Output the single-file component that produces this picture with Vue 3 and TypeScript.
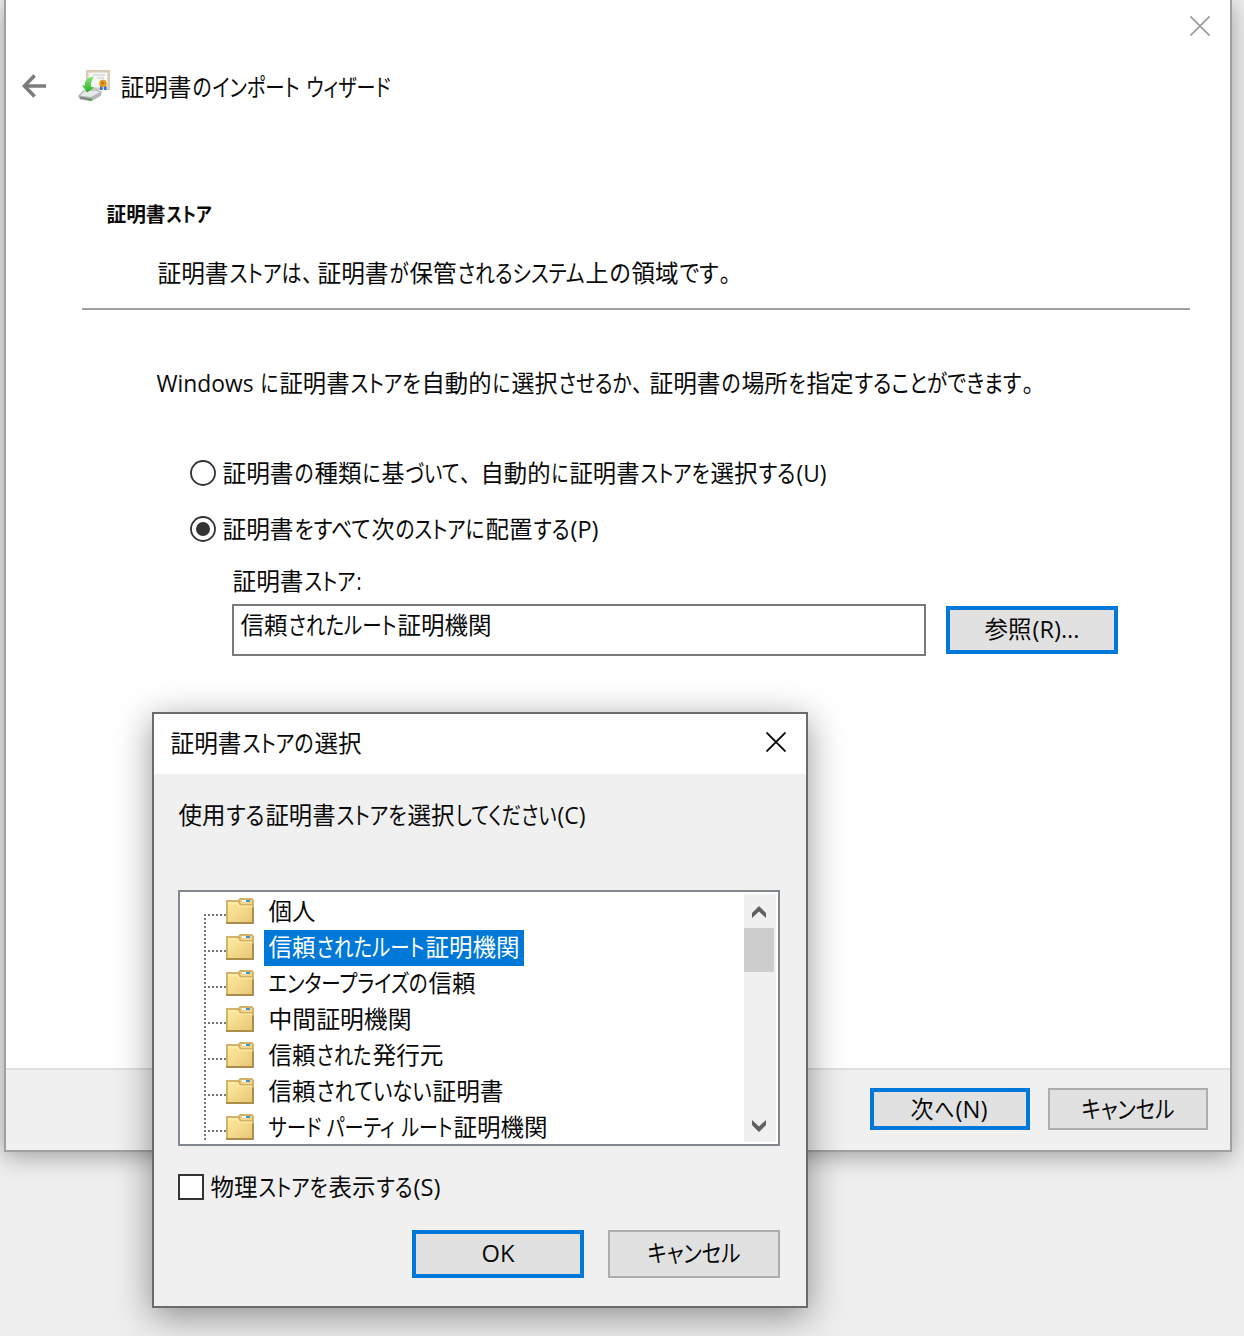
<script setup lang="ts">
import { h } from 'vue'

// A run is a piece of text with its advance width in pixels; an empty text is a gap.
type Run = [text: string, width: number]

interface LabelProps {
  runs: Run[]
  size?: number
  weight?: number
  color?: string
}

const isKana = (text: string) => /^[\u3001\u3002\u3040-\u30ff]+$/.test(text)
const isLatin = (text: string) => /^[\x20-\x7e]+$/.test(text)

const Label = (props: LabelProps) => {
  let x = 0
  const parts = props.runs.map(([text, width]) => {
    const left = x
    x += width
    if (!text) return null
    return h(
      'text',
      {
        x: left + 0.5,
        y: 24,
        textLength: width - 1,
        lengthAdjust: 'spacingAndGlyphs',
        class: { kana: isKana(text), latin: isLatin(text) },
      },
      text,
    )
  })
  return h(
    'svg',
    {
      class: 'label',
      width: x,
      height: 32,
      'font-size': props.size ?? 24,
      'font-weight': props.weight ?? 400,
      fill: props.color ?? '#0a0a0a',
    },
    parts,
  )
}
Label.props = ['runs', 'size', 'weight', 'color']

const title: Run[] = [['証明書', 72], ['の', 20], ['インポート', 88], ['', 6], ['ウィザード', 85]]
const heading: Run[] = [['証明書', 60], ['ストア', 46]]
const description: Run[] = [
  ['証明書', 72], ['ストアは', 73], ['、', 11], ['', 4], ['証明書', 72], ['が', 20], ['保管', 48],
  ['されるシステム', 128], ['上', 24], ['の', 22], ['領域', 48], ['です', 40], ['。', 12],
]
const explanation: Run[] = [
  ['Windows', 98], ['', 6], ['に', 19], ['証明書', 71], ['ストアを', 71], ['自動的', 71], ['に', 19],
  ['選択', 47], ['させるか', 74], ['、', 11], ['', 6], ['証明書', 72], ['の', 20], ['場所', 47], ['を', 18],
  ['指定', 48], ['することができます', 168], ['。', 12],
]
const options: { runs: Run[]; checked: boolean }[] = [
  {
    checked: false,
    runs: [
      ['証明書', 72], ['の', 20], ['種類', 48], ['に', 19], ['基', 24], ['づいて', 55], ['、', 11], ['', 9],
      ['自動的', 71], ['に', 18], ['証明書', 71], ['ストアを', 70], ['選択', 48], ['する', 38], ['(U)', 31],
    ],
  },
  {
    checked: true,
    runs: [
      ['証明書', 72], ['をすべて', 77], ['次', 24], ['のストアに', 90], ['配置', 48], ['する', 37], ['(P)', 29],
    ],
  },
]
const storeLabel: Run[] = [['証明書', 72], ['ストア', 52], [':', 6]]
const storeValue: Run[] = [['信頼', 48], ['されたルート', 109], ['証明機関', 95]]
const browse: Run[] = [['参照', 48], ['(R)...', 48]]
const next: Run[] = [['次', 24], ['へ', 21], ['(N)', 33]]
const cancel: Run[] = [['キャンセル', 94]]
const ok: Run[] = [['OK', 34]]
const dialogTitle: Run[] = [['証明書', 72], ['ストアの', 72], ['選択', 48]]
const prompt: Run[] = [
  ['使用', 48], ['する', 39], ['証明書', 71], ['ストアを', 71], ['選択', 48], ['してください', 102], ['(C)', 29],
]
const showPhysical: Run[] = [['物理', 48], ['ストアを', 70], ['表示', 48], ['する', 37], ['(S)', 28]]

const stores: { runs: Run[]; selected?: boolean }[] = [
  { runs: [['個人', 48]] },
  { runs: [['信頼', 48], ['されたルート', 109], ['証明機関', 95]], selected: true },
  { runs: [['エンタープライズの', 160], ['信頼', 48]] },
  { runs: [['中間証明機関', 144]] },
  { runs: [['信頼', 48], ['された', 56], ['発行元', 72]] },
  { runs: [['信頼', 48], ['されていない', 116], ['証明書', 72]] },
  { runs: [['サード', 54], ['', 4], ['パーティ', 69], ['', 6], ['ルート', 52], ['証明機関', 95]] },
]
</script>

<template>
  <div class="desktop">
    <section class="wizard">
      <div class="caption">
        <svg width="20" height="20" stroke="#999" stroke-width="1.6"><path d="M.5 .5 19.5 19.5M19.5 .5 .5 19.5" /></svg>
      </div>
      <header class="header">
        <svg class="back" width="24" height="24" fill="none" stroke="#7b7b7b" stroke-width="3.6">
          <path d="M24 12H2M12.6 1.4 2.400 12l10.200 10.600" />
        </svg>
        <svg class="cert" width="32" height="32">
          <defs>
            <linearGradient id="arrow" x1="0" y1="0" x2="0" y2="1">
              <stop offset="0" stop-color="#8be27b" /><stop offset="1" stop-color="#22b522" />
            </linearGradient>
          </defs>
          <path d="M8 0h24v20H8z" fill="#d8ccb8" />
          <path d="M10.500 2.500h19v15h-19z" fill="#f6f6f3" />
          <path d="M15 5h12M19 8h7" stroke="#d5dae0" stroke-width="1.500" />
          <path d="M22 16h2.500v4h-2.500zM26 16h2.500v4h-2.500z" fill="#2d6fe0" />
          <circle cx="25" cy="13.500" r="3.700" fill="#e39a1c" />
          <circle cx="24.500" cy="13" r="1.600" fill="#c97b08" />
          <path d="M0 26 5 20.500 18 19.500 24 21.500 22.500 26 13 31.500 2 29.500z" fill="#b4b6ba" />
          <path d="M2 25.500 6 21.500 17 20.500 22 22 13 27z" fill="#e8e9eb" />
          <path d="M2 27.500 12 29.500" stroke="#75777b" stroke-width="1.500" />
          <path d="M11 28.500h3v2h-3z" fill="#3fae35" />
          <path d="M16 6.500C9.500 7.500 6.500 10 7 15.500L4 15l5 7.500 7.500-5-3.500-.8c-.5-4 1-7.200 3-10.200z" fill="url(#arrow)" />
        </svg>
        <Label :runs="title" class="title" />
      </header>
      <Label class="heading" :runs="heading" :size="20" :weight="700" />
      <Label class="description" :runs="description" />
      <div class="rule"></div>
      <Label class="explanation" :runs="explanation" />
      <div class="options">
        <div v-for="(option, i) in options" :key="i" class="option">
          <svg width="26" height="26">
            <circle cx="13" cy="13" r="12" fill="#fff" stroke="#333" stroke-width="1.800" />
            <circle v-if="option.checked" cx="13" cy="13" r="7" fill="#333" />
          </svg>
          <Label :runs="option.runs" />
        </div>
      </div>
      <Label class="store-label" :runs="storeLabel" />
      <div class="store-row">
        <div class="field"><Label :runs="storeValue" /></div>
        <div class="button primary browse"><Label :runs="browse" /></div>
      </div>
      <footer class="footer">
        <div class="button primary"><Label :runs="next" /></div>
        <div class="button"><Label :runs="cancel" /></div>
      </footer>
    </section>

    <section class="dialog">
      <header class="dialog-bar">
        <Label :runs="dialogTitle" />
        <svg width="20" height="20" stroke="#000" stroke-width="1.800"><path d="M.5 .5 19.5 19.5M19.5 .5 .5 19.5" /></svg>
      </header>
      <div class="dialog-body">
        <Label class="prompt" :runs="prompt" />
        <div class="tree">
          <div class="rows">
            <div v-for="(store, i) in stores" :key="i" class="row" :class="{ selected: store.selected }">
              <div class="branch"></div>
              <svg class="folder" width="28" height="26">
                <defs>
                  <linearGradient id="folder" x1="0" y1="0" x2="1" y2="1">
                    <stop offset="0" stop-color="#ffeb9e" /><stop offset="1" stop-color="#e9c777" />
                  </linearGradient>
                </defs>
                <path d="M0 2h12l2-2h12l2 2v24H0z" fill="#d2b266" />
                <path d="M2 4h10l2 4h12v16H2z" fill="url(#folder)" />
                <path d="M14 2h12v4H15z" fill="#f3d58c" />
                <path d="M16 2h8v2h-8z" fill="#fff" />
                <path d="M20 2h4v2h-4z" fill="#3b94dc" />
                <path d="M2 5h9l2 3h13" fill="none" stroke="#fff0b4" stroke-width="1.200" />
                <path d="M0 25h28M27 10v16" stroke="#a98e4c" stroke-width="2" />
              </svg>
              <div class="name"><Label :runs="store.runs" :color="store.selected ? '#fff' : undefined" /></div>
            </div>
          </div>
          <div class="scrollbar">
            <svg width="14" height="12" fill="#606060"><path d="M7 0 14 7v5L7 5.500 0 12V7z" /></svg>
            <div class="thumb"></div>
            <svg class="down" width="14" height="12" fill="#606060"><path d="M7 12 14 5V0L7 6.500 0 0v5z" /></svg>
          </div>
        </div>
        <div class="check">
          <div class="box"></div>
          <Label :runs="showPhysical" />
        </div>
        <div class="actions">
          <div class="button primary"><Label :runs="ok" /></div>
          <div class="button"><Label :runs="cancel" /></div>
        </div>
      </div>
    </section>
  </div>
</template>

<style>
body {
  margin: 0;
  background: #eee;
}
.label {
  display: block;
  flex: none;
  overflow: visible;
  font-family: 'Noto Sans CJK JP', sans-serif;
  white-space: pre;
}
.label .kana {
  font-feature-settings: 'palt';
}
.label .latin {
  font-family: 'Open Sans', 'Noto Sans', sans-serif;
}
</style>

<style scoped>
.desktop {
  position: relative;
  box-sizing: border-box;
  height: 1336px;
  padding: 0 12px 0 4px;
  overflow: hidden;
  background: #eee;
}
svg {
  display: block;
  flex: none;
}
.wizard {
  display: flex;
  flex-direction: column;
  box-sizing: border-box;
  height: 1152px;
  border: 2px solid #a0a0a0;
  border-top: 0;
  background: #fff;
  box-shadow: 0 4px 22px rgba(0, 0, 0, 0.34);
}
.caption {
  display: flex;
  justify-content: flex-end;
  box-sizing: border-box;
  height: 62px;
  padding: 16px 20px 0 0;
}
.header {
  display: flex;
  align-items: center;
  height: 48px;
  padding-left: 16px;
}
.cert {
  margin-left: 32px;
}
.title {
  margin: 4px 0 0 10px;
}
.heading {
  margin: 88px 0 0 100px;
}
.description {
  margin: 28px 0 0 151px;
}
.rule {
  height: 2px;
  margin: 18px 40px 0 76px;
  background: #a0a0a0;
}
.explanation {
  margin: 58px 0 0 150px;
}
.options {
  display: flex;
  flex-direction: column;
  gap: 24px;
  margin: 58px 0 0 184px;
}
.option {
  display: flex;
  align-items: center;
  gap: 6px;
  height: 32px;
}
.option > svg:first-child {
  margin-bottom: 2px;
}
.store-label {
  margin: 20px 0 0 226px;
}
.store-row {
  display: flex;
  align-items: center;
  gap: 20px;
  margin: 6px 0 0 226px;
}
.field {
  box-sizing: border-box;
  width: 694px;
  height: 52px;
  padding: 4px 6px;
  border: 2px solid #7a7a7a;
}
.button {
  display: flex;
  align-items: center;
  justify-content: center;
  box-sizing: border-box;
  border: 2px solid #adadad;
  background: #e1e1e1;
}
.primary {
  border: 4px solid #0078d7;
}
.browse {
  width: 172px;
  height: 48px;
}
.footer {
  display: flex;
  justify-content: flex-end;
  gap: 18px;
  box-sizing: border-box;
  height: 82px;
  margin-top: auto;
  padding: 18px 22px 0 0;
  border-top: 2px solid #dfdfdf;
  background: #f0f0f0;
}
.footer .button {
  width: 160px;
  height: 42px;
  padding-top: 2px;
}
.footer .primary {
  padding-right: 2px;
}
.dialog {
  position: absolute;
  left: 152px;
  top: 712px;
  box-sizing: border-box;
  width: 656px;
  height: 596px;
  border: 2px solid #6b6b6b;
  background: #f0f0f0;
  box-shadow: 0 8px 34px rgba(0, 0, 0, 0.42);
}
.dialog-bar {
  display: flex;
  align-items: center;
  justify-content: space-between;
  box-sizing: border-box;
  height: 60px;
  padding: 0 20px 0 16px;
  background: #fff;
}
.dialog-bar > svg:last-child {
  margin-bottom: 4px;
}
.dialog-body {
  padding: 26px 26px 0 24px;
}
.tree {
  display: flex;
  box-sizing: border-box;
  height: 256px;
  margin-top: 58px;
  padding: 2px 2px 2px 24px;
  border: 2px solid #828790;
  background: #fff;
}
.rows {
  flex: 1;
  height: 250px;
}
.row {
  display: flex;
  height: 36px;
}
.row:last-child {
  height: 34px;
}
.branch {
  width: 22px;
  background:
    repeating-linear-gradient(to right, #777 0 2px, transparent 2px 4px) 0 20px / 22px 2px no-repeat,
    repeating-linear-gradient(to bottom, #777 0 2px, transparent 2px 4px) 0 0 / 2px 100% no-repeat;
}
.row:first-child .branch {
  background-position: 0 20px, 0 20px;
}
.row:last-child .branch {
  height: 30px;
}
.folder {
  margin-top: 4px;
}
.name {
  margin-left: 10px;
  padding: 2px 4px 0;
}
.selected .name {
  background: #0078d7;
}
.scrollbar {
  display: flex;
  flex-direction: column;
  box-sizing: border-box;
  width: 32px;
  height: 248px;
  padding: 12px 0 10px;
  background: #f0f0f0;
}
.scrollbar svg {
  margin-left: 8px;
}
.scrollbar .down {
  margin-top: auto;
}
.thumb {
  width: 30px;
  height: 44px;
  margin-top: 10px;
  background: #cdcdcd;
}
.check {
  display: flex;
  align-items: flex-start;
  gap: 6px;
  margin-top: 26px;
}
.box {
  box-sizing: border-box;
  width: 26px;
  height: 26px;
  margin-top: 2px;
  border: 2px solid #333;
  background: #fff;
}
.actions {
  display: flex;
  justify-content: flex-end;
  gap: 24px;
  margin-top: 26px;
}
.actions .button {
  width: 172px;
  height: 48px;
}
</style>
